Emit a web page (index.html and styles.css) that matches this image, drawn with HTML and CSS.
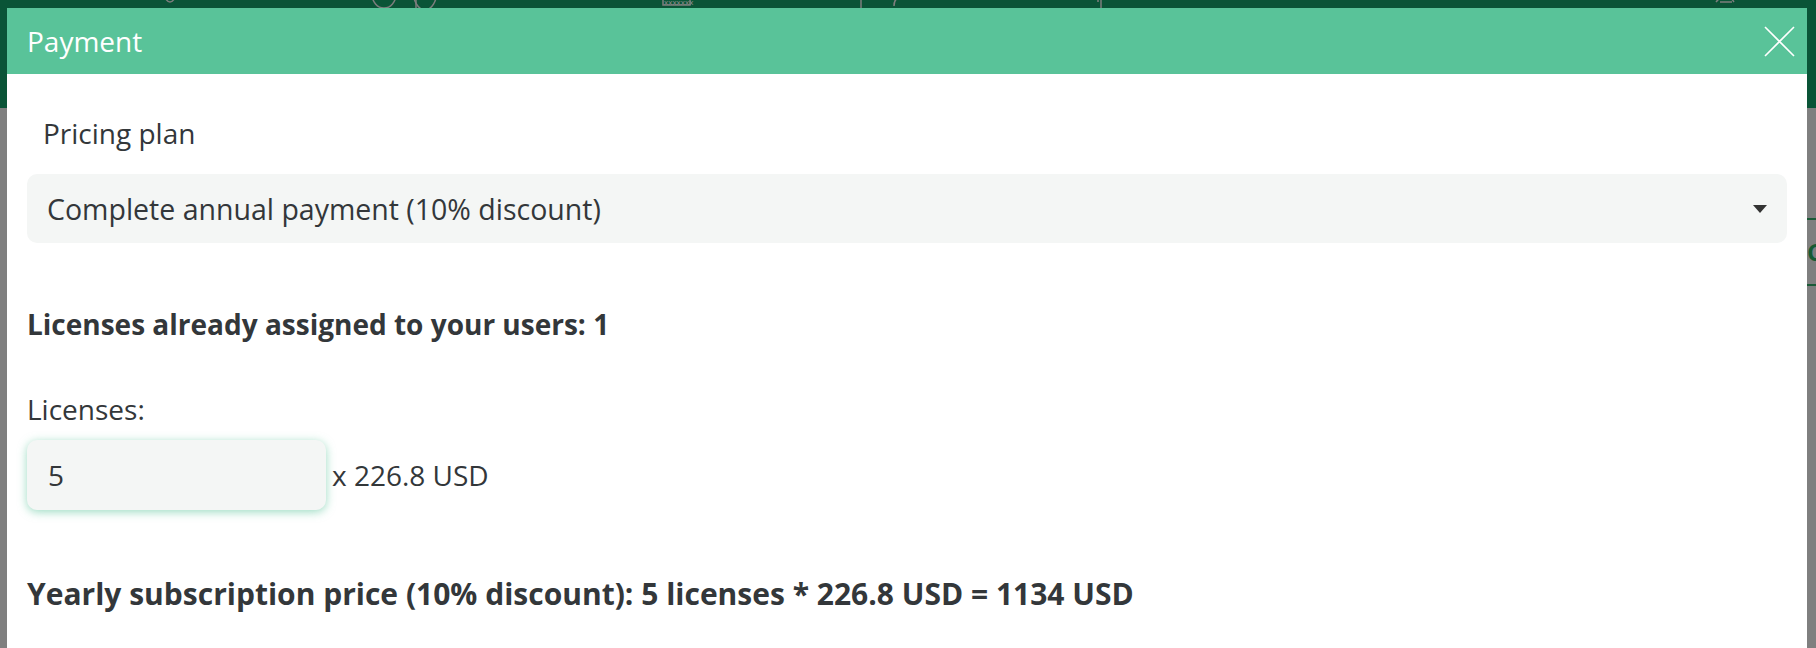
FILE: index.html
```html
<!DOCTYPE html>
<html lang="en">
<head>
    <meta charset="UTF-8">
    <meta name="viewport" content="width=device-width, initial-scale=1.0">
    <title>Payment</title>
    <link rel="stylesheet" href="styles.css">
</head>
<body>
    <div class="page">
        <div class="topbar">
            <svg class="doodles" width="1816" height="108" viewBox="0 0 1816 108" fill="none" stroke="#7d7d7d" stroke-width="1.5">
                <path d="M164 -4 q6 12 12 0"/>
                <ellipse cx="384" cy="-6" rx="12" ry="14"/>
                <ellipse cx="425" cy="-10" rx="12" ry="20"/>
                <path d="M416 -10 v20"/>
                <rect x="663" y="-10" width="27" height="15"/>
                <path d="M861 -10 v20 M900 -2 q-6 0 -6 8 M900 -10 v8 M1061 -4 q14 -2 18 -12 M1098 -6 v8 M1101 -10 v20"/>
                <path d="M1716 2 q10 -12 18 0 M1720 2 h12"/>
            </svg>
            <span class="stitch">xxxxxxx</span>
        </div>
        <div class="page-content">
            <div class="row-line"></div>
            <div class="row-text">Ca</div>
            <div class="row-line"></div>
        </div>
    </div>

    <div class="modal">
        <div class="modal-header">
            <span class="modal-title">Payment</span>
            <button class="close-btn" type="button" aria-label="Close">
                <svg width="31" height="31" viewBox="0 0 31 31" stroke="#ffffff" stroke-width="1.6">
                    <path d="M1 1 L30 30 M30 1 L1 30"/>
                </svg>
            </button>
        </div>
        <div class="modal-body">
            <div class="field-label">Pricing plan</div>
            <div class="select">
                <span>Complete annual payment (10% discount)</span>
                <span class="caret"></span>
            </div>
            <p class="assigned">Licenses already assigned to your users: 1</p>
            <div class="licenses-label">Licenses:</div>
            <div class="licenses-row">
                <div class="number-input">5</div>
                <span class="unit-price">x 226.8 USD</span>
            </div>
            <p class="total">Yearly subscription price (10% discount): 5 licenses * 226.8 USD = 1134 USD</p>
        </div>
    </div>
</body>
</html>
```

FILE: styles.css
```css
html, body {
    margin: 0;
    height: 100%;
    overflow: hidden;
}
body {
    font-family: "Open Sans", "Noto Sans", Arial, sans-serif;
    background-color: #7f7f7f;
    color: #33373a;
}
.page {
    position: relative;
    height: 648px;
}
.topbar {
    height: 108px;
    background-color: #0a5437;
    position: relative;
    overflow: hidden;
}
.doodles {
    display: block;
}
.stitch {
    position: absolute;
    left: 664px;
    top: -4px;
    font-size: 8px;
    color: #8a8a8a;
}
.page-content {
    padding-top: 110px;
    padding-left: 1807px;
}
.row-line {
    height: 2px;
    background-color: #1b5a37;
}
.row-text {
    height: 64px;
    line-height: 64px;
    font-size: 24px;
    font-weight: 700;
    color: #165a33;
    white-space: nowrap;
    overflow: hidden;
}

.modal {
    position: absolute;
    left: 7px;
    top: 8px;
    width: 1800px;
    height: 640px;
    background-color: #ffffff;
}
.modal-header {
    display: flex;
    align-items: center;
    justify-content: space-between;
    height: 66px;
    padding: 0 12px 0 20px;
    background-color: #59c399;
}
.modal-title {
    font-size: 28px;
    line-height: 66px;
    color: #ffffff;
}
.close-btn {
    display: flex;
    padding: 0;
    border: none;
    background: none;
    cursor: pointer;
}
.modal-body {
    padding: 39px 20px 0 20px;
    font-size: 28px;
    line-height: 40px;
}
.field-label {
    padding-left: 16px;
    margin-bottom: 21px;
}
.select {
    display: flex;
    align-items: center;
    justify-content: space-between;
    height: 69px;
    padding: 0 20px 0 20px;
    font-size: 28.5px;
    background-color: #f4f6f5;
    border-radius: 10px;
}
.caret {
    width: 0;
    height: 0;
    border-left: 7.5px solid transparent;
    border-right: 7.5px solid transparent;
    border-top: 8px solid #333333;
}
.assigned {
    margin: 61px 0 45px 0;
    font-weight: 700;
}
.licenses-label {
    margin-bottom: 11px;
}
.licenses-row {
    display: flex;
    align-items: center;
    gap: 6px;
}
.number-input {
    width: 278px;
    height: 70px;
    line-height: 70px;
    padding-left: 21px;
    background-color: #f4f6f5;
    border-radius: 10px;
    box-shadow: 0 2px 10px rgba(89, 195, 153, 0.6);
}
.total {
    margin: 64px 0 0 0;
    font-size: 30px;
    font-weight: 700;
}
```
